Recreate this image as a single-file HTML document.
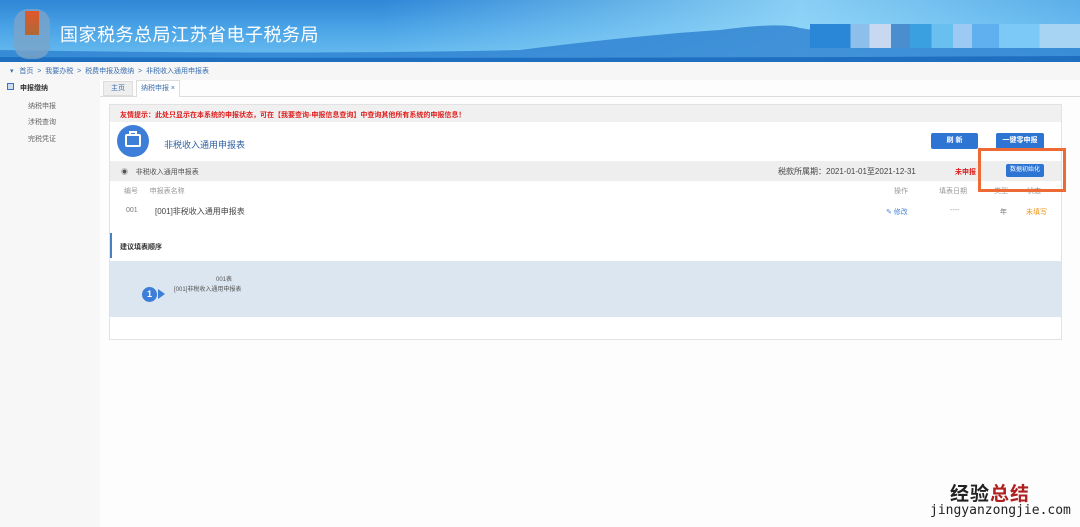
<!DOCTYPE html>
<html><head><meta charset="utf-8"><style>
*{margin:0;padding:0;box-sizing:border-box}
body{width:1080px;height:527px;overflow:hidden;background:#fff;font-family:"Liberation Sans","Noto Sans CJK SC",sans-serif;position:relative;font-size:7px;color:#555}
.a{position:absolute}
</style></head><body>
<div class="a" style="left:0;top:0;width:1080px;height:62px;background:linear-gradient(180deg,#2f86d6 0%,#4aa3e6 45%,#6cc1f0 100%)"></div>
<div class="a" style="left:380px;top:0;width:700px;height:62px;background:linear-gradient(90deg,rgba(255,255,255,0) 0%,rgba(160,225,252,.8) 60%,rgba(120,200,245,.6) 100%)"></div>
<svg class="a" style="left:0;top:0" width="1080" height="62"><path d="M0 62 L0 50 Q300 55 520 50 Q640 35 720 30 Q780 22 800 28 Q900 45 1080 48 L1080 62Z" fill="#2c7fcf" opacity=".8"/><path d="M0 62 L0 57 Q500 59 1080 56 L1080 62Z" fill="#1f6fc0"/></svg>
<div class="a" style="left:810px;top:24px;width:270px;height:24px;background:linear-gradient(90deg,#2a86d6 0 15%,#8cc0ea 15% 22%,#c8d8f0 22% 30%,#4a8ed0 30% 37%,#3aa0e0 37% 45%,#68bff0 45% 53%,#9ccaf2 53% 60%,#60b0f0 60% 70%,#7cc8f6 70% 85%,#a8d4f4 85%)"></div>
<div class="a" style="left:14px;top:9px;width:36px;height:50px;border-radius:14px;background:#7aa4c8;opacity:.8"></div>
<div class="a" style="left:25px;top:11px;width:14px;height:24px;background:linear-gradient(#e0582a,#b06838)"></div>
<div class="a" style="left:60px;top:21px;font-size:18px;color:#fff;letter-spacing:.5px">国家税务总局江苏省电子税务局</div>
<div class="a" style="left:0;top:62px;width:1080px;height:18px;background:#f6f6f6"></div>
<div class="a" style="left:10px;top:66px;color:#3a6fb0">▾ &nbsp; 首页 &nbsp;&gt;&nbsp; 我要办税 &nbsp;&gt;&nbsp; 税费申报及缴纳 &nbsp;&gt;&nbsp; 非税收入通用申报表</div>
<div class="a" style="left:0;top:80px;width:100px;height:447px;background:#f7f7f7"></div>
<div class="a" style="left:7px;top:83px;width:7px;height:7px;border:1px solid #3a74c8;background:#cde"></div>
<div class="a" style="left:20px;top:83px;color:#333;font-weight:bold">申报缴纳</div>
<div class="a" style="left:28px;top:101px;color:#666">纳税申报</div>
<div class="a" style="left:28px;top:117px;color:#666">涉税查询</div>
<div class="a" style="left:28px;top:134px;color:#666">完税凭证</div>
<div class="a" style="left:100px;top:80px;width:980px;height:447px;background:#fdfdfd"></div>
<div class="a" style="left:100px;top:96px;width:980px;height:1px;background:#ddd"></div>
<div class="a" style="left:103px;top:81px;width:30px;height:15px;background:#eee;border:1px solid #ddd;color:#3a6fb0;text-align:center;line-height:13px">主页</div>
<div class="a" style="left:136px;top:80px;width:44px;height:17px;background:#fff;border:1px solid #ddd;border-bottom:none;color:#3a6fb0;text-align:center;line-height:15px">纳税申报 ×</div>
<div class="a" style="left:109px;top:104px;width:953px;height:236px;background:#fff;border:1px solid #e2e2e2"></div>
<div class="a" style="left:110px;top:105px;width:951px;height:17px;background:#f0f0f0"></div>
<div class="a" style="left:120px;top:110px;color:#e02020;font-weight:bold">友情提示：此处只显示在本系统的申报状态，可在【我要查询-申报信息查询】中查询其他所有系统的申报信息！</div>
<div class="a" style="left:117px;top:125px;width:32px;height:32px;border-radius:50%;background:#3d7fd8"></div>
<div class="a" style="left:125px;top:134px;width:16px;height:13px;border:2px solid #fff;border-radius:2px"></div>
<div class="a" style="left:129px;top:131px;width:8px;height:4px;border:2px solid #fff;border-bottom:none"></div>
<div class="a" style="left:164px;top:138px;font-size:9px;color:#2f5fa0">非税收入通用申报表</div>
<div class="a" style="left:931px;top:133px;width:47px;height:16px;background:#2e74d2;border-radius:2px;color:#fff;text-align:center;line-height:16px;font-weight:bold">刷 新</div>
<div class="a" style="left:996px;top:133px;width:48px;height:16px;background:#2e74d2;border-radius:2px;color:#fff;text-align:center;line-height:16px;font-weight:bold">一键零申报</div>
<div class="a" style="left:110px;top:161px;width:951px;height:20px;background:#eeeeee"></div>
<div class="a" style="left:121px;top:167px;color:#555">◉ &nbsp;&nbsp; 非税收入通用申报表</div>
<div class="a" style="left:778px;top:166px;font-size:8px;color:#444">税款所属期：2021-01-01至2021-12-31</div>
<div class="a" style="left:955px;top:167px;color:#e02020;font-weight:bold">未申报</div>
<div class="a" style="left:1006px;top:164px;width:38px;height:13px;background:#2e74d2;border-radius:2px;color:#fff;text-align:center;line-height:13px;font-size:6px">数据初始化</div>
<div class="a" style="left:124px;top:186px;color:#999">编号 &nbsp;&nbsp;&nbsp;&nbsp; 申报表名称</div>
<div class="a" style="left:894px;top:186px;color:#999">操作</div>
<div class="a" style="left:939px;top:186px;color:#999">填表日期</div>
<div class="a" style="left:994px;top:186px;color:#999">类型</div>
<div class="a" style="left:1027px;top:186px;color:#999">状态</div>
<div class="a" style="left:126px;top:207px;color:#777">001</div>
<div class="a" style="left:155px;top:206px;font-size:8px;color:#444">[001]非税收入通用申报表</div>
<div class="a" style="left:886px;top:207px;color:#4a86d8">✎ 修改</div>
<div class="a" style="left:950px;top:207px;color:#999">----</div>
<div class="a" style="left:1000px;top:207px;color:#777">年</div>
<div class="a" style="left:1026px;top:207px;color:#f09a20">未填写</div>
<div class="a" style="left:110px;top:233px;width:2px;height:25px;background:#4a80c0"></div>
<div class="a" style="left:120px;top:242px;color:#333;font-weight:bold">建议填表顺序</div>
<div class="a" style="left:110px;top:261px;width:951px;height:56px;background:#dbe6f1"></div>
<div class="a" style="left:216px;top:274px;font-size:6px;color:#555">001表</div>
<div class="a" style="left:174px;top:284px;font-size:6px;color:#555">[001]非税收入通用申报表</div>
<div class="a" style="left:142px;top:287px;width:15px;height:15px;border-radius:50%;background:#3d7fd8;color:#fff;font-weight:bold;font-size:9px;text-align:center;line-height:15px">1</div>
<div class="a" style="left:158px;top:289px;width:0;height:0;border-top:5px solid transparent;border-bottom:5px solid transparent;border-left:7px solid #3d7fd8"></div>
<div class="a" style="left:978px;top:148px;width:88px;height:44px;border:3px solid #ee6a35"></div>
<div class="a" style="left:950px;top:479px;font-size:19px;font-weight:bold;color:#222;letter-spacing:1px">经验<span style="color:#b02020">总结</span></div>
<div class="a" style="left:930px;top:503px;font-size:13px;color:#222;font-family:'DejaVu Sans Mono',monospace">jingyanzongjie.com</div>
</body></html>
